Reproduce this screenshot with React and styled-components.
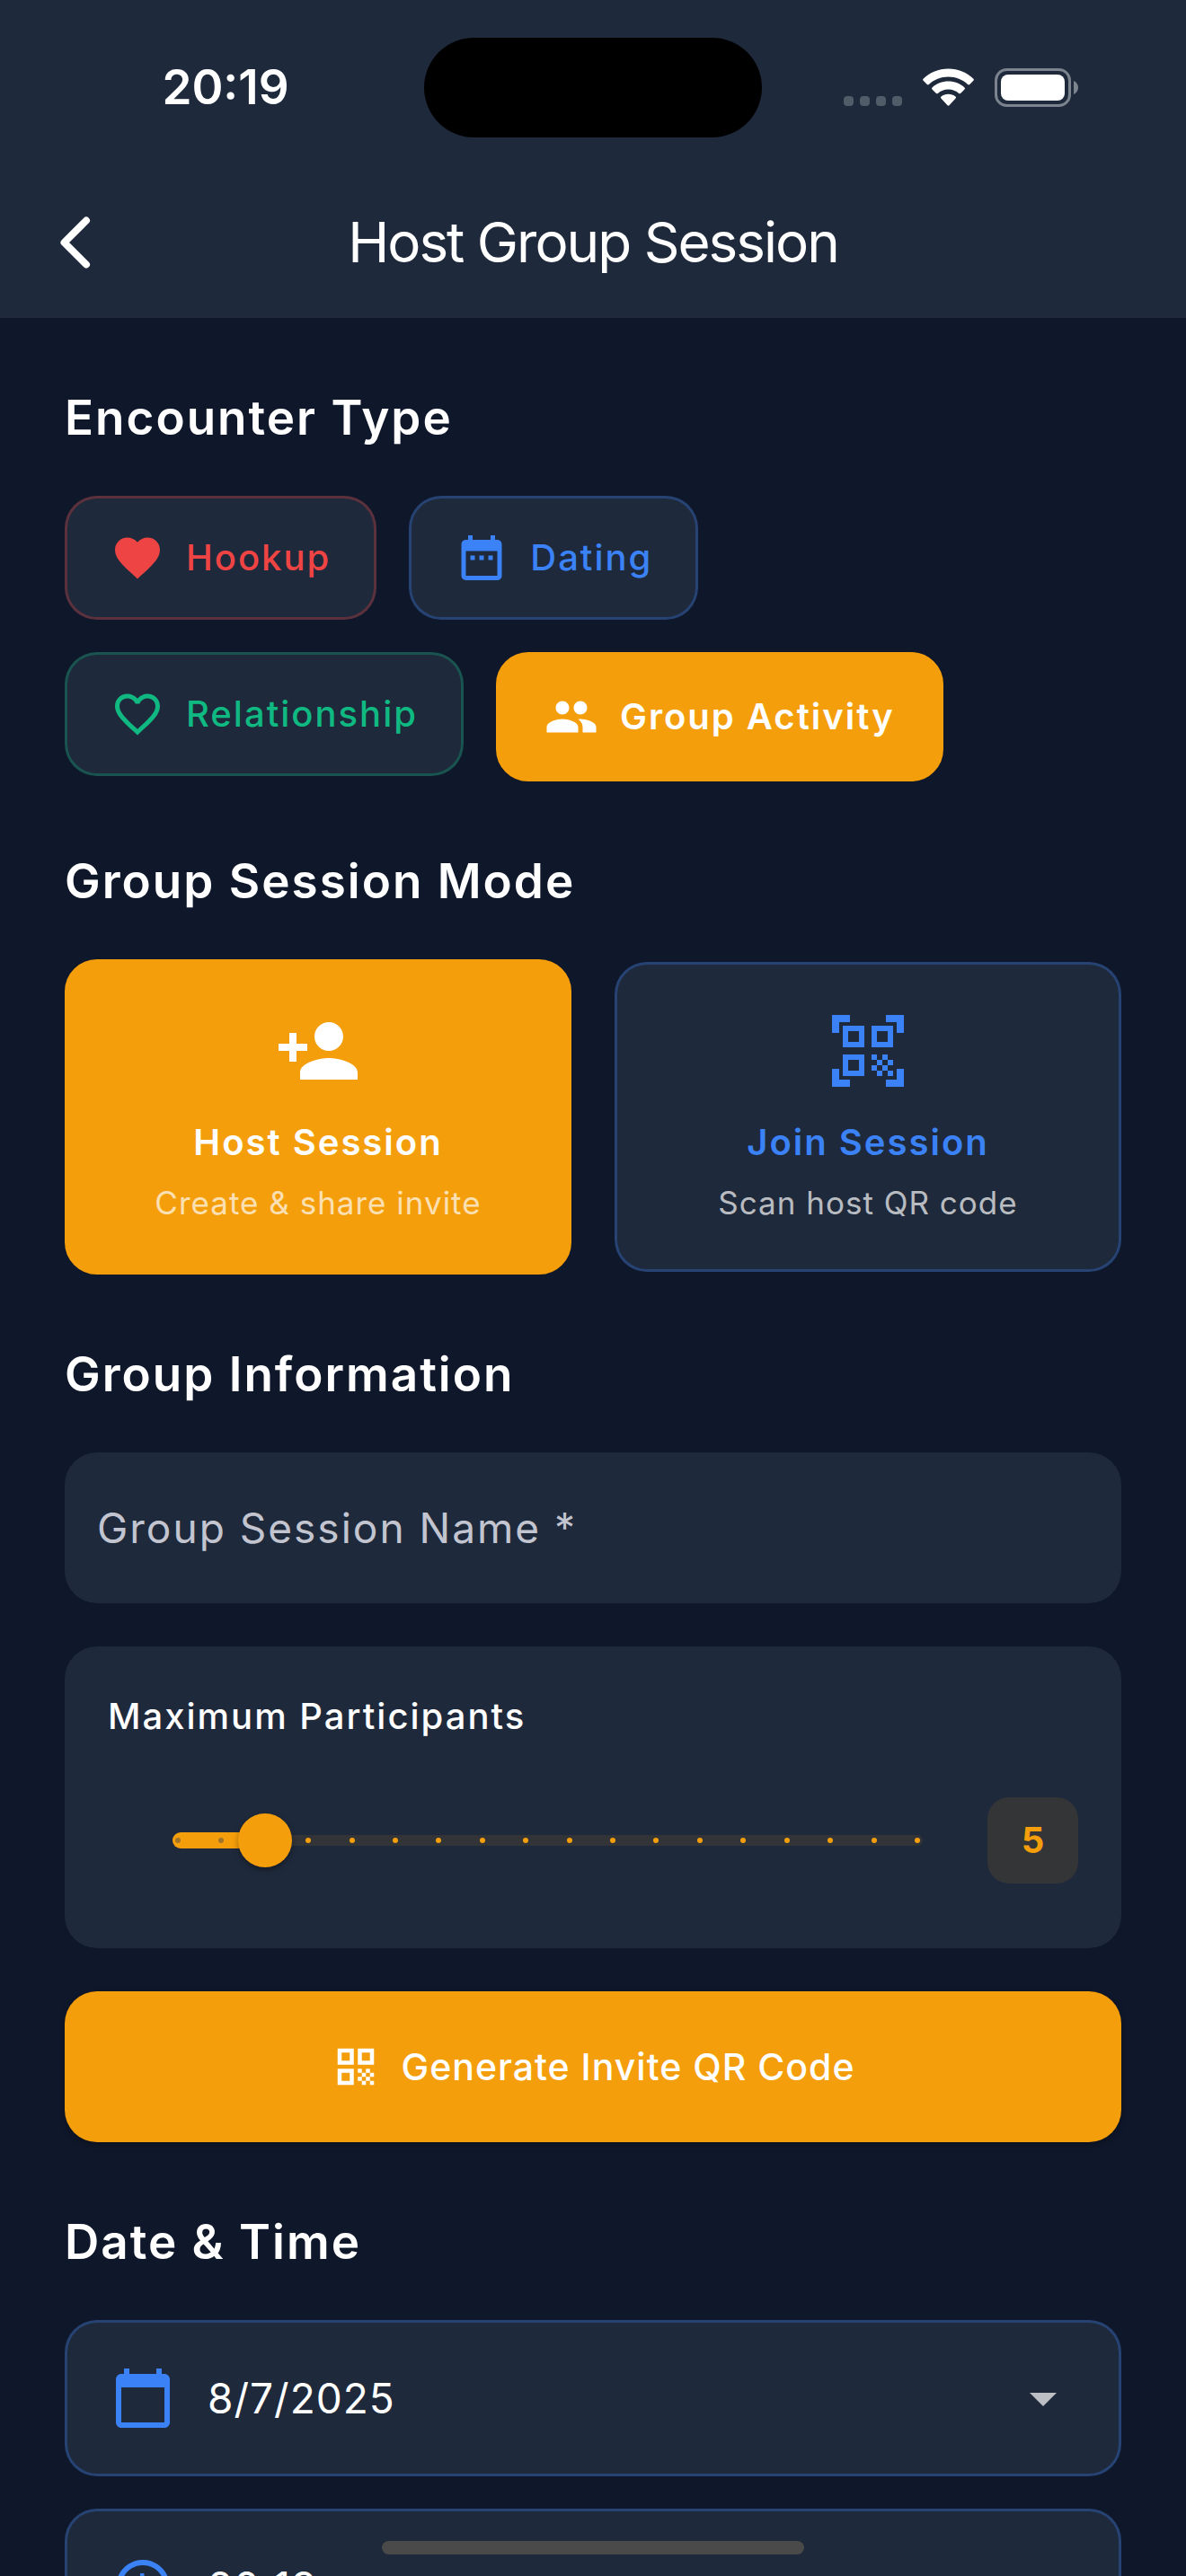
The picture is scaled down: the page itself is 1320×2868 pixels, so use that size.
import React, { useState } from "react";
import styled, { createGlobalStyle, css } from "styled-components";
import {
  MdAccessTime,
  MdArrowDropDown,
  MdCalendarToday,
  MdDateRange,
  MdFavorite,
  MdFavoriteBorder,
  MdGroup,
  MdPersonAdd,
  MdQrCode,
  MdQrCodeScanner,
} from "react-icons/md";

const c = {
  bg: "#0f172a",
  surface: "#1e293b",
  orange: "#f59e0b",
  blue: "#3b82f6",
  red: "#ef4444",
  green: "#10b981",
  muted: "rgba(255, 255, 255, 0.7)",
};

const GlobalStyle = createGlobalStyle`
  *, *::before, *::after { box-sizing: border-box; }
  html, body { margin: 0; background: ${c.bg}; }
  body, button, input, select {
    font-family: Inter, "Liberation Sans", sans-serif;
  }
  button, input, select { margin: 0; }
`;

const Screen = styled.div`
  display: flex;
  flex-direction: column;
  height: 100vh;
  overflow: hidden;
  background: ${c.bg};
  color: #fff;
`;

const Header = styled.header`
  flex: none;
  background: ${c.surface};
`;

const StatusBar = styled.div`
  display: grid;
  grid-template-columns: 1fr 376px 1fr;
  align-items: center;
  justify-items: center;
  height: 186px;
  padding: 8px 30px 0;
`;

const Time = styled.span`
  font-size: 53px;
  line-height: 64px;
  font-weight: 600;
`;

const Island = styled.div`
  width: 100%;
  height: 111px;
  border-radius: 56px;
  background: #000;
`;

const StatusIcons = styled.div`
  display: flex;
  align-items: flex-end;
  gap: 23px;

  svg { display: block; }
`;

const Toolbar = styled.div`
  display: grid;
  grid-template-columns: 144px 1fr 144px;
  align-items: center;
  height: 168px;
  padding: 0 12px;
`;

const BackButton = styled.button`
  display: grid;
  place-items: center;
  width: 144px;
  height: 144px;
  padding: 0;
  border: 0;
  background: none;
  color: #fff;
`;

const Title = styled.h1`
  margin: 0;
  text-align: center;
  font-size: 62px;
  line-height: 84px;
  font-weight: 400;
  letter-spacing: -2px;
`;

const Content = styled.main`
  flex: 1;
  min-height: 0;
  overflow: hidden;
  padding: 0 72px;
`;

const Section = styled.section`
  padding-top: 72px;
`;

const SectionTitle = styled.h2`
  margin: 0 0 48px;
  font-size: 53px;
  line-height: 78px;
  font-weight: 600;
  letter-spacing: 2px;
`;

const ChipRow = styled.div`
  display: flex;
  flex-wrap: wrap;
  align-items: flex-start;
  gap: 36px;
`;

const selectable = css`
  border: ${(p) => (p.$active ? "6px" : "3px")} solid
    ${(p) => (p.$active ? c.orange : `${p.$tone}4d`)};
  border-radius: 36px;
  background: ${(p) => (p.$active ? c.orange : c.surface)};
  color: ${(p) => (p.$active ? "#fff" : p.$tone)};
`;

const Chip = styled.button`
  ${selectable}
  display: flex;
  align-items: center;
  gap: 24px;
  padding: 36px 48px;
  font-size: 40px;
  line-height: 60px;
  font-weight: ${(p) => (p.$active ? 600 : 500)};
  letter-spacing: 2px;

  svg { width: 60px; height: 60px; }
`;

const ModeRow = styled.div`
  display: grid;
  grid-template-columns: 1fr 1fr;
  align-items: center;
  gap: 48px;
`;

const ModeCard = styled.button`
  ${selectable}
  display: flex;
  flex-direction: column;
  align-items: center;
  padding: 48px;

  svg { width: 96px; height: 96px; margin-bottom: 24px; }
`;

const ModeTitle = styled.span`
  margin-bottom: 12px;
  font-size: 40px;
  line-height: 60px;
  font-weight: 600;
  letter-spacing: 2px;
`;

const ModeHint = styled.span`
  font-size: 35px;
  line-height: 51px;
  letter-spacing: 1px;
  color: ${c.muted};
`;

const Stack = styled.div`
  display: flex;
  flex-direction: column;
  gap: ${(p) => p.$gap}px;
`;

const TextInput = styled.input`
  width: 100%;
  height: 168px;
  padding: 0 36px;
  border: 0;
  border-radius: 36px;
  background: ${c.surface};
  color: #fff;
  font-size: 46px;
  letter-spacing: 2px;

  &::placeholder { color: #c2c5d0; opacity: 1; }
`;

const Panel = styled.div`
  padding: 48px;
  border-radius: 36px;
  background: ${c.surface};
`;

const PanelLabel = styled.label`
  display: block;
  margin-bottom: 36px;
  font-size: 40px;
  line-height: 60px;
  font-weight: 500;
  letter-spacing: 2px;
`;

const SliderRow = styled.div`
  display: flex;
  align-items: center;
  height: 144px;
`;

const Slider = styled.div`
  flex: 1;
  display: grid;
  align-items: center;
  margin: 0 48px;

  > * { grid-area: 1 / 1; }
`;

const Rail = styled.div`
  height: 12px;
  margin: 0 24px;
  border-radius: 6px;
  background: #333438;
`;

const Fill = styled.div`
  height: 18px;
  margin: 0 24px;

  > div {
    height: 18px;
    border-radius: 9px;
    background: ${c.orange};
  }
`;

const Ticks = styled.div`
  display: flex;
  justify-content: space-between;
  margin: 0 27px;
`;

const Tick = styled.span`
  width: 6px;
  height: 6px;
  border-radius: 50%;
  background: ${(p) => (p.$on ? "#a27428" : c.orange)};
`;

const Range = styled.input`
  appearance: none;
  width: 100%;
  height: 60px;
  background: transparent;

  &::-webkit-slider-thumb {
    appearance: none;
    width: 60px;
    height: 60px;
    border: 0;
    border-radius: 50%;
    background: ${c.orange};
    box-shadow: 0 3px 6px rgba(0, 0, 0, 0.35);
  }
`;

const Value = styled.output`
  display: grid;
  place-items: center;
  min-width: 101px;
  height: 96px;
  padding: 0 36px;
  border-radius: 24px;
  background: #333537;
  color: ${c.orange};
  font-size: 40px;
  line-height: 60px;
  font-weight: 700;
`;

const PrimaryButton = styled.button`
  display: flex;
  align-items: center;
  justify-content: center;
  gap: 24px;
  width: 100%;
  height: 168px;
  border: 0;
  border-radius: 36px;
  background: ${c.orange};
  box-shadow: 0 3px 6px rgba(0, 0, 0, 0.3);
  color: #fff;
  font-size: 41px;
  line-height: 60px;
  font-weight: 500;
  letter-spacing: 1px;

  svg { width: 54px; height: 54px; }
`;

const Picker = styled.label`
  display: flex;
  align-items: center;
  padding: 48px;
  border: 3px solid ${c.blue}4d;
  border-radius: 36px;
  background: ${c.surface};
  color: ${c.blue};

  svg { flex: none; width: 72px; height: 72px; }
  svg:last-child { color: ${c.muted}; }
`;

const Select = styled.select`
  appearance: none;
  flex: 1;
  height: 72px;
  margin-left: 36px;
  padding: 0;
  border: 0;
  background: transparent;
  color: #fff;
  font-size: 46px;
  letter-spacing: 1px;
`;

const HomeIndicator = styled.div`
  position: fixed;
  left: 50%;
  bottom: 24px;
  width: 470px;
  height: 15px;
  margin-left: -235px;
  border-radius: 8px;
  background: #4a4a4a;
`;

const encounters = [
  { id: "hookup", label: "Hookup", tone: c.red, Icon: MdFavorite },
  { id: "dating", label: "Dating", tone: c.blue, Icon: MdDateRange },
  { id: "relationship", label: "Relationship", tone: c.green, Icon: MdFavoriteBorder },
  { id: "group", label: "Group Activity", tone: c.orange, Icon: MdGroup },
];

const modes = [
  { id: "host", label: "Host Session", hint: "Create & share invite", Icon: MdPersonAdd },
  { id: "join", label: "Join Session", hint: "Scan host QR code", Icon: MdQrCodeScanner },
];

const MIN = 3;
const MAX = 20;

const SignalDots = () => (
  <svg width="65" height="12" viewBox="0 0 65 12" fill="#515c69" aria-hidden="true">
    {[0, 18, 36, 54].map((x) => (
      <rect key={x} x={x} y="0" width="11" height="11" rx="4" />
    ))}
  </svg>
);

const Wifi = () => (
  <svg width="57" height="43" viewBox="0 0 57 43" fill="#fff" aria-hidden="true">
    <path d="M28.500 0.500C39.300 0.500 49.200 4.700 56.400 11.700C57 12.300 57 13.200 56.400 13.800L52.200 18C51.600 18.600 50.700 18.600 50.100 18.100C44.300 12.600 36.800 9.600 28.500 9.600C20.200 9.600 12.700 12.600 6.900 18.100C6.300 18.600 5.400 18.600 4.800 18L0.600 13.800C0 13.200 0 12.300 0.600 11.700C7.800 4.700 17.700 0.500 28.500 0.500Z" />
    <path d="M28.500 14.600C35.400 14.600 41.700 17.200 46.500 21.500C47.100 22.100 47.100 23 46.500 23.600L42.300 27.800C41.700 28.400 40.900 28.400 40.200 27.900C37 25.200 33 23.600 28.500 23.600C24 23.600 20 25.200 16.800 27.900C16.100 28.400 15.300 28.400 14.700 27.800L10.500 23.600C9.900 23 9.900 22.100 10.500 21.500C15.300 17.200 21.600 14.600 28.500 14.600Z" />
    <path d="M28.500 28.800C31.500 28.800 34.300 29.800 36.500 31.500C37.200 32 37.200 33 36.600 33.600L29.500 41.200C28.900 41.800 28.100 41.800 27.500 41.200L20.400 33.600C19.800 33 19.800 32 20.500 31.500C22.700 29.800 25.500 28.800 28.500 28.800Z" />
  </svg>
);

const Battery = () => (
  <svg width="93" height="43" viewBox="0 0 93 43" aria-hidden="true">
    <rect x="1.500" y="1.500" width="82" height="40" rx="12" fill="none" stroke="#7b838e" strokeWidth="3" />
    <rect x="7" y="7" width="71" height="29" rx="8" fill="#fff" />
    <path d="M88 14C91 15.200 93 18 93 21.500S91 27.800 88 29Z" fill="#7b838e" />
  </svg>
);

const BackChevron = () => (
  <svg width="36" height="60" viewBox="0 0 36 60" fill="none" stroke="#fff" strokeWidth="8" strokeLinecap="round" strokeLinejoin="round" aria-hidden="true">
    <path d="M30 5.500L5.500 30L30 54.500" />
  </svg>
);

export default function App() {
  const [encounter, setEncounter] = useState("group");
  const [mode, setMode] = useState("host");
  const [count, setCount] = useState(5);
  const ratio = (count - MIN) / (MAX - MIN);
  const steps = Array.from({ length: MAX - MIN + 1 }, (_, i) => MIN + i);

  return (
    <Screen>
      <GlobalStyle />
      <Header>
        <StatusBar>
          <Time>20:19</Time>
          <Island />
          <StatusIcons>
            <SignalDots />
            <Wifi />
            <Battery />
          </StatusIcons>
        </StatusBar>
        <Toolbar>
          <BackButton type="button" aria-label="Back">
            <BackChevron />
          </BackButton>
          <Title>Host Group Session</Title>
        </Toolbar>
      </Header>

      <Content>
        <Section>
          <SectionTitle>Encounter Type</SectionTitle>
          <ChipRow>
            {encounters.map(({ id, label, tone, Icon }) => (
              <Chip
                key={id}
                type="button"
                $tone={tone}
                $active={id === encounter}
                aria-pressed={id === encounter}
                onClick={() => setEncounter(id)}
              >
                <Icon aria-hidden="true" />
                {label}
              </Chip>
            ))}
          </ChipRow>
        </Section>

        <Section>
          <SectionTitle>Group Session Mode</SectionTitle>
          <ModeRow>
            {modes.map(({ id, label, hint, Icon }) => (
              <ModeCard
                key={id}
                type="button"
                $tone={c.blue}
                $active={id === mode}
                aria-pressed={id === mode}
                onClick={() => setMode(id)}
              >
                <Icon aria-hidden="true" />
                <ModeTitle>{label}</ModeTitle>
                <ModeHint>{hint}</ModeHint>
              </ModeCard>
            ))}
          </ModeRow>
        </Section>

        <Section>
          <SectionTitle>Group Information</SectionTitle>
          <Stack $gap={48}>
            <TextInput type="text" placeholder="Group Session Name *" aria-label="Group Session Name" required />
            <Panel>
              <PanelLabel htmlFor="participants">Maximum Participants</PanelLabel>
              <SliderRow>
                <Slider>
                  <Rail />
                  <Fill>
                    <div style={{ width: `${ratio * 100}%` }} />
                  </Fill>
                  <Ticks>
                    {steps.map((n) => (
                      <Tick key={n} $on={n < count} />
                    ))}
                  </Ticks>
                  <Range
                    id="participants"
                    type="range"
                    min={MIN}
                    max={MAX}
                    value={count}
                    onChange={(e) => setCount(Number(e.target.value))}
                  />
                </Slider>
                <Value htmlFor="participants">{count}</Value>
              </SliderRow>
            </Panel>
            <PrimaryButton type="button">
              <MdQrCode aria-hidden="true" />
              Generate Invite QR Code
            </PrimaryButton>
          </Stack>
        </Section>

        <Section>
          <SectionTitle>Date &amp; Time</SectionTitle>
          <Stack $gap={36}>
            <Picker>
              <MdCalendarToday aria-hidden="true" />
              <Select aria-label="Date" defaultValue="8/7/2025">
                <option>8/7/2025</option>
              </Select>
              <MdArrowDropDown aria-hidden="true" />
            </Picker>
            <Picker>
              <MdAccessTime aria-hidden="true" />
              <Select aria-label="Time" defaultValue="20:19">
                <option>20:19</option>
              </Select>
              <MdArrowDropDown aria-hidden="true" />
            </Picker>
          </Stack>
        </Section>
      </Content>
      <HomeIndicator />
    </Screen>
  );
}
